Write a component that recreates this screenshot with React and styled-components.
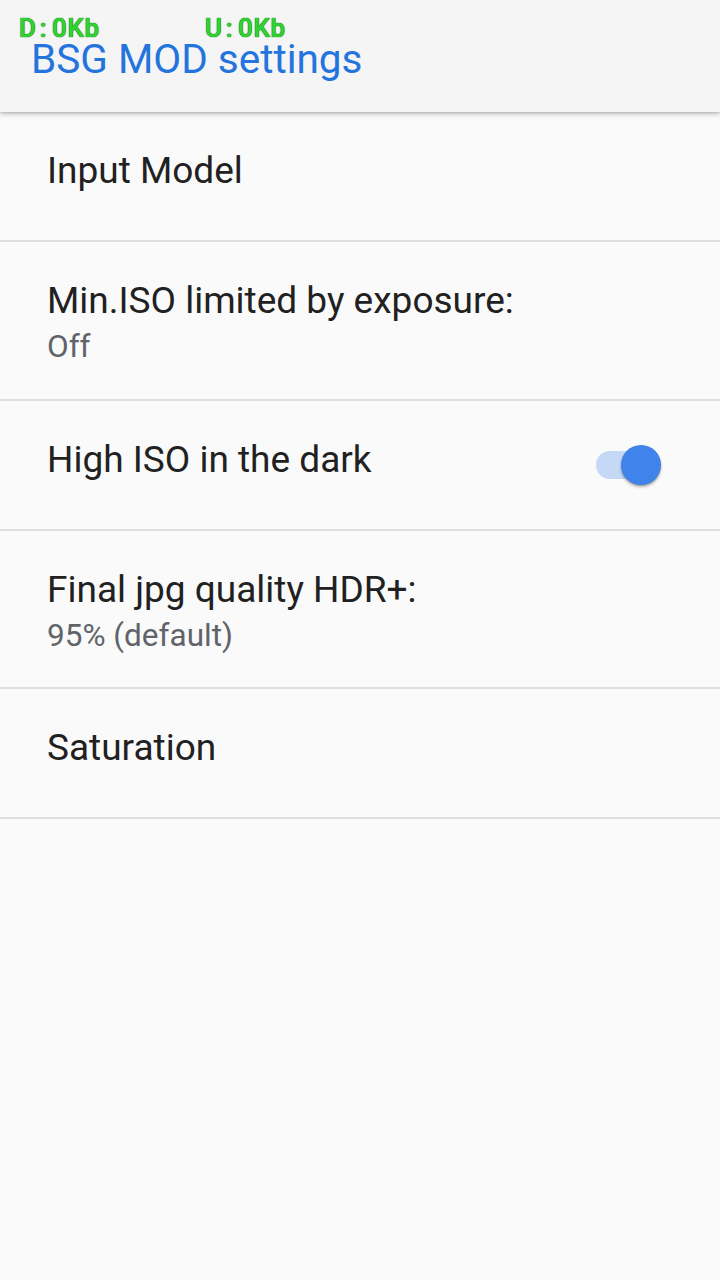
import React from "react";
import styled, { createGlobalStyle } from "styled-components";

const Global = createGlobalStyle`
  html, body { margin: 0; padding: 0; background: #fafafa; }
  body { font-family: Roboto, "Noto Sans", sans-serif; }
  * { box-sizing: border-box; }
`;

const Screen = styled.div`
  width: 720px;
  min-height: 1280px;
  background: #fafafa;
  position: relative;
`;

const AppBar = styled.header`
  position: relative;
  height: 112px;
  background: #f5f5f5;
  box-shadow: 0 2px 5px rgba(0, 0, 0, 0.22), 0 1px 2px rgba(0, 0, 0, 0.12);
  padding: 35px 0 0 31px;
  z-index: 2;
`;

const Title = styled.h1`
  margin: 0;
  font-family: Roboto, sans-serif;
  font-weight: 400;
  font-size: 40.5px;
  line-height: 48px;
  color: #2374dc;
`;

const TrafficOverlay = styled.div`
  position: absolute;
  top: 15px;
  left: 19px;
  display: flex;
  gap: 105px;
  pointer-events: none;
  z-index: 3;
`;

const Traffic = styled.span`
  display: flex;
`;

const Cell = styled.span`
  display: inline-block;
  width: 16.2px;
  text-align: center;
  font-family: Roboto, sans-serif;
  font-weight: 500;
  font-size: 26px;
  line-height: 26px;
  color: #30d430;
  text-shadow: 0 0 1px #0b6e0b, 0 0 1px #0b6e0b;
`;

const List = styled.div`
  display: flex;
  flex-direction: column;
`;

const Row = styled.div`
  display: flex;
  align-items: flex-start;
  justify-content: space-between;
  height: ${(p) => (p.$tall ? "158.5px" : "130px")};
  padding: 37px 59px 0 47px;
  border-bottom: 2px solid #dedede;
`;

const Texts = styled.div`
  display: flex;
  flex-direction: column;
`;

const ItemTitle = styled.div`
  font-family: Roboto, sans-serif;
  font-size: 37px;
  line-height: 44px;
  color: #212121;
`;

const Summary = styled.div`
  margin-top: 4px;
  font-family: Roboto, sans-serif;
  font-size: 31.5px;
  line-height: 40px;
  color: #60646a;
`;

const Switch = styled.div`
  position: relative;
  width: 65px;
  height: 40px;
  margin-top: 7px;
  flex-shrink: 0;
`;

const Track = styled.div`
  position: absolute;
  left: 0;
  top: 6px;
  width: 59px;
  height: 28px;
  border-radius: 14px;
  background: #c5d8f6;
`;

const Thumb = styled.div`
  position: absolute;
  right: 0;
  top: 0;
  width: 40px;
  height: 40px;
  border-radius: 50%;
  background: #4083ea;
  box-shadow: 0 2px 3px rgba(0, 0, 0, 0.28), 0 1px 1px rgba(0, 0, 0, 0.14);
`;

const items = [
  { title: "Input Model" },
  { title: "Min.ISO limited by exposure:", summary: "Off" },
  { title: "High ISO in the dark", toggle: true },
  { title: "Final jpg quality HDR+:", summary: "95% (default)" },
  { title: "Saturation" },
];

function Meter({ text }) {
  return (
    <Traffic aria-label={text}>
      {text.split("").map((c, i) => (
        <Cell key={i}>{c}</Cell>
      ))}
    </Traffic>
  );
}

export default function App() {
  return (
    <Screen>
      <Global />
      <AppBar>
        <Title>BSG MOD settings</Title>
      </AppBar>
      <TrafficOverlay>
        <Meter text="D:0Kb" />
        <Meter text="U:0Kb" />
      </TrafficOverlay>
      <List>
        {items.map((it) => (
          <Row key={it.title} $tall={!!it.summary}>
            <Texts>
              <ItemTitle>{it.title}</ItemTitle>
              {it.summary && <Summary>{it.summary}</Summary>}
            </Texts>
            {it.toggle && (
              <Switch>
                <Track />
                <Thumb />
              </Switch>
            )}
          </Row>
        ))}
      </List>
    </Screen>
  );
}
